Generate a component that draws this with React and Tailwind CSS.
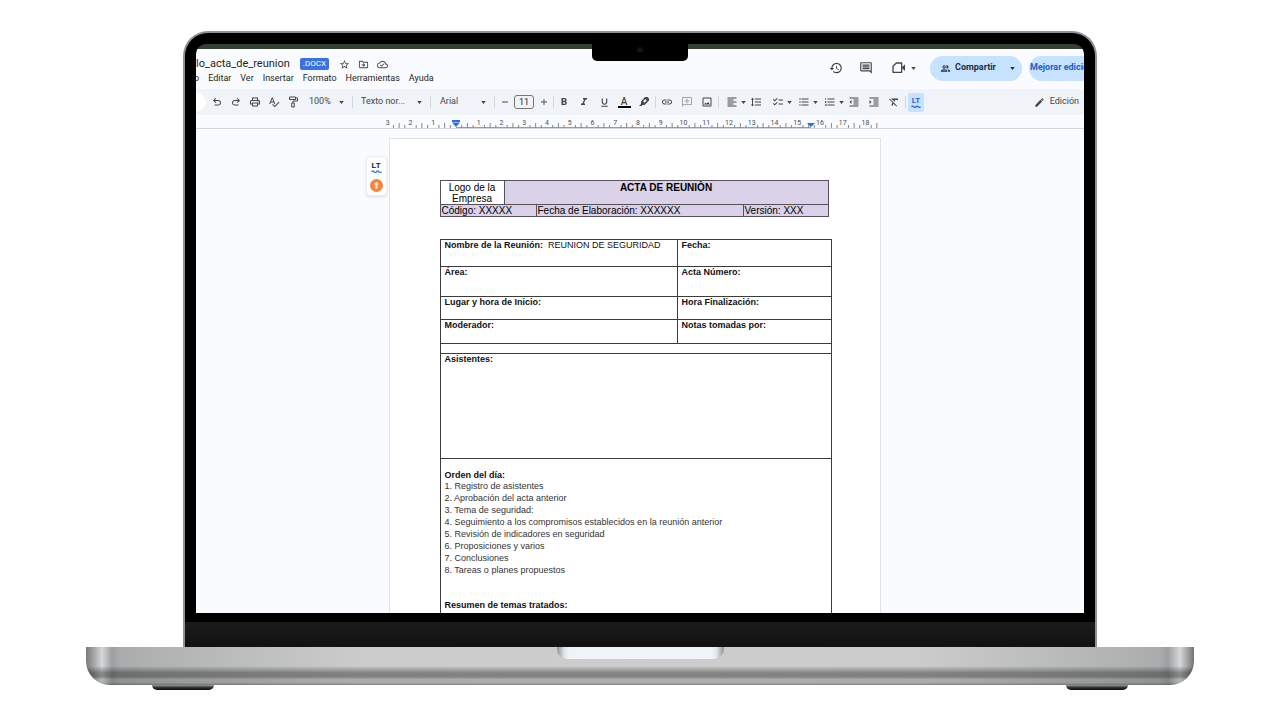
import {
  MdHistory, MdOutlineComment, MdOutlineGroup, MdOutlinePrint,
  MdSpellcheck, MdAdd, MdRemove, MdFormatBold, MdFormatItalic, MdFormatUnderlined, MdInsertLink,
  MdOutlineAddComment, MdOutlineImage, MdFormatAlignLeft, MdFormatLineSpacing, MdChecklist,
  MdFormatListBulleted, MdFormatListNumbered, MdFormatIndentDecrease, MdFormatIndentIncrease,
  MdFormatClear, MdModeEdit, MdStarOutline, MdOutlineDriveFileMove, MdOutlineCloudDone,
} from "react-icons/md";

const MENUS = ["Editar", "Ver", "Insertar", "Formato", "Herramientas", "Ayuda"];

const AGENDA = [
  "Registro de asistentes",
  "Aprobación del acta anterior",
  "Tema de seguridad:",
  "Seguimiento a los compromisos establecidos en la reunión anterior",
  "Revisión de indicadores en seguridad",
  "Proposiciones y varios",
  "Conclusiones",
  "Tareas o planes propuestos",
];

function UndoIcon({ flip }) {
  return (
    <svg viewBox="0 -960 960 960" fill="currentColor" className={flip ? "size-3 -scale-x-100" : "size-3"}>
      <path d="M280-200v-80h284q63 0 109.500-40T720-420q0-60-46.500-100T564-560H312l104 104-56 56-200-200 200-200 56 56-104 104h252q97 0 166.500 63T800-420q0 94-69.500 157T564-200H280Z" />
    </svg>
  );
}

function PaintRollerIcon() {
  return (
    <svg viewBox="0 0 24 24" fill="none" stroke="currentColor" strokeWidth="2" className="size-3">
      <path d="M5 2h12v5H5zM17 4h4v6h-9v4M9.500 14h5v8h-5z" />
    </svg>
  );
}

function HighlighterIcon() {
  return (
    <svg viewBox="0 0 24 24" className="size-3" fill="currentColor">
      <path d="M14 2h5l3 3v4l-9 9H9l-2 2H2l4-4v-5zM14.500 6L10 10.500l3 3L17.500 9z" fillRule="evenodd" />
    </svg>
  );
}

function VideoIcon() {
  return (
    <svg viewBox="0 0 24 24" fill="none" stroke="currentColor" strokeWidth="2" className="size-4">
      <path d="M8 4.500h8v14H3v-9z" strokeLinejoin="round" />
      <path d="M16 11.500l5-5v10z" fill="currentColor" stroke="none" />
    </svg>
  );
}

function LanguageToolMark({ wave }) {
  return (
    <span className="flex flex-col items-center">
      <span className="text-[8px] font-bold leading-[8px]">LT</span>
      <svg viewBox="0 0 20 5" className={wave} fill="none" stroke="currentColor" strokeWidth="2.500">
        <path d="M1 3q2.500-3 4.500 0t4.500 0t4.500 0t4.500 0" />
      </svg>
    </span>
  );
}

function Tool({ label, wide, children }) {
  return (
    <button
      type="button"
      aria-label={label}
      className={(wide ? "w-5" : "w-[19px]") + " flex h-5 shrink-0 items-center justify-center text-[12px]"}
    >
      {children}
    </button>
  );
}

function Caret() {
  return (
    <svg viewBox="0 0 6 4" className="h-[3px] w-[5px] shrink-0" fill="currentColor">
      <path d="M0 0h6L3 4z" />
    </svg>
  );
}

function MenuTool({ label, children }) {
  return (
    <button type="button" aria-label={label} className="flex h-5 w-[26px] shrink-0 items-center justify-end gap-[3px] text-[12px]">
      {children}
      <Caret />
    </button>
  );
}

function Picker({ label, value, className }) {
  return (
    <label className={className + " flex h-5 shrink-0 items-center pr-2"}>
      <select aria-label={label} className="min-w-0 flex-1 appearance-none bg-transparent">
        <option>{value}</option>
      </select>
      <Caret />
    </label>
  );
}

function Separator({ spaced }) {
  return <span className={(spaced ? "mx-px" : "") + " h-3 w-px shrink-0 bg-[#d3d6dc]"} />;
}

function Header() {
  return (
    <header className="flex h-10 justify-between">
      <div className="flex flex-col pt-2">
        <div className="flex h-[14px] items-center gap-[10px]">
          <h1 className="text-[11px] leading-[14px] text-[#1f1f1f]">lo_acta_de_reunion</h1>
          <span className="flex h-3 items-center rounded-[2px] bg-[#3b71e0] px-[3px] text-[8px] font-normal text-white">.DOCX</span>
          <span className="flex items-center gap-2 text-[11px] text-[#444746]">
            <button type="button" aria-label="Destacar"><MdStarOutline /></button>
            <button type="button" aria-label="Mover"><MdOutlineDriveFileMove /></button>
            <button type="button" aria-label="Estado del documento"><MdOutlineCloudDone /></button>
          </span>
        </div>
        <nav className="flex h-[15px] items-center gap-[9px] text-[9px] text-[#1f1f1f]">
          <span className="-ml-[2px]">o</span>
          {MENUS.map((m) => (
            <button key={m} type="button">{m}</button>
          ))}
        </nav>
      </div>
      <div className="flex h-[38px] items-center text-[#444746]">
        <button type="button" aria-label="Historial" className="mr-4 text-[14px]"><MdHistory /></button>
        <button type="button" aria-label="Comentarios" className="mr-[18px] text-[14px]"><MdOutlineComment /></button>
        <button type="button" aria-label="Videollamada" className="mr-[14px] flex items-center gap-1"><VideoIcon /><Caret /></button>
        <div className="mr-[7px] flex h-[25px] w-[92px] items-center justify-between rounded-full bg-[#c5e2fe] pl-[10px] pr-[7px] text-[9px] font-bold text-[#1f2d3d]">
          <button type="button" className="flex items-center gap-1">
            <MdOutlineGroup className="size-[11px]" />
            Compartir
          </button>
          <button type="button" aria-label="Opciones para compartir" className="flex h-4 items-center"><Caret /></button>
        </div>
        <button type="button" className="h-[25px] w-[55px] overflow-hidden whitespace-nowrap rounded-l-full bg-[#c5e2fe] pl-px text-left text-[9px] font-bold text-[#1f5bd0]">
          Mejorar edición
        </button>
      </div>
    </header>
  );
}

function Toolbar() {
  return (
    <div className="flex h-[26px] items-center bg-[#f0f4f9] text-[9px] text-[#444746]">
      <span className="mr-px h-[18px] w-[10px] shrink-0 rounded-r-full bg-white" />
      <Tool label="Deshacer"><UndoIcon /></Tool>
      <Tool label="Rehacer"><UndoIcon flip /></Tool>
      <Tool label="Imprimir"><MdOutlinePrint /></Tool>
      <Tool label="Ortografía"><MdSpellcheck /></Tool>
      <Tool label="Copiar formato"><PaintRollerIcon /></Tool>
      <Picker label="Zoom" value="100%" className="w-[50px] pl-[7px]" />
      <Separator />
      <Picker label="Estilo" value="Texto nor..." className="w-[77px] pl-2" />
      <Separator />
      <Picker label="Fuente" value="Arial" className="w-[63px] pl-[9px]" />
      <Separator />
      <Tool label="Reducir tamaño"><MdRemove className="size-[10px]" /></Tool>
      <input aria-label="Tamaño" defaultValue="11" className="h-[14px] w-5 rounded-[3px] border border-[#747775] bg-transparent text-center text-[#1f1f1f]" />
      <Tool label="Aumentar tamaño"><MdAdd className="size-[10px]" /></Tool>
      <Separator />
      <Tool wide label="Negrita"><MdFormatBold /></Tool>
      <Tool wide label="Cursiva"><MdFormatItalic /></Tool>
      <Tool wide label="Subrayado"><MdFormatUnderlined className="size-[11px]" /></Tool>
      <Tool wide label="Color del texto">
        <span className="w-[13px] border-b-2 border-black text-[10px] font-medium leading-[9px]">A</span>
      </Tool>
      <Tool wide label="Resaltar"><HighlighterIcon /></Tool>
      <Separator spaced />
      <Tool wide label="Insertar enlace"><MdInsertLink /></Tool>
      <Tool wide label="Añadir comentario"><MdOutlineAddComment className="-scale-x-100 text-[#a5a8ab]" /></Tool>
      <Tool wide label="Insertar imagen"><MdOutlineImage /></Tool>
      <Separator spaced />
      <MenuTool label="Alinear"><MdFormatAlignLeft /></MenuTool>
      <Tool wide label="Interlineado"><MdFormatLineSpacing /></Tool>
      <MenuTool label="Lista de comprobación"><MdChecklist /></MenuTool>
      <MenuTool label="Lista con viñetas"><MdFormatListBulleted /></MenuTool>
      <MenuTool label="Lista numerada"><MdFormatListNumbered /></MenuTool>
      <Tool wide label="Reducir sangría"><MdFormatIndentDecrease /></Tool>
      <Tool wide label="Aumentar sangría"><MdFormatIndentIncrease /></Tool>
      <Tool wide label="Borrar formato"><MdFormatClear /></Tool>
      <Separator spaced />
      <button type="button" aria-label="LanguageTool" className="ml-px flex h-[19px] w-4 items-center justify-center rounded-[2px] bg-[#c5e2fe] text-[#2f62cf]">
        <LanguageToolMark wave="h-[3px] w-[10px]" />
      </button>
      <button type="button" className="ml-auto flex items-center gap-[5px] pr-[5px]">
        <MdModeEdit className="size-[11px]" />
        Edición
      </button>
    </div>
  );
}

const UNIT = 22.75;

function Ruler() {
  const x = (cm) => 71 + cm * UNIT;
  const numbers = Array.from({ length: 22 }, (_, i) => i - 3).filter((n) => n <= 18 && n !== 0);
  const ticks = Array.from({ length: 87 }, (_, i) => -3 + (i + 1) / 4).filter((t) => t <= 18.5 && t % 1 !== 0);
  return (
    <div className="flex h-[14px] justify-center border-b border-[#d3d6dc] pr-[11px]">
      <svg viewBox="0 0 500 13" className="h-[13px] w-[500px]" aria-hidden="true">
        <path d="M71 12.500H426" stroke="#9a9da0" />
        {ticks.map((t) => (
          <path key={t} d={`M${x(t)} ${Math.abs(t % 1) === 0.5 ? 8 : 10}V13`} stroke="#85888b" />
        ))}
        {numbers.map((n) => (
          <text key={n} x={x(n)} y="10" textAnchor="middle" fontSize="7" fill="#4a4d50">{Math.abs(n)}</text>
        ))}
        <path d="M67 5h8v2h-8zM67 7.500h8l-4 4.500z" fill="#2b6fe0" />
        <path d="M422 8h8l-4 4z" fill="#2b6fe0" />
      </svg>
    </div>
  );
}

function HeadingTable() {
  const cell = "border border-[#55525c] p-0 align-top";
  return (
    <table className="w-[389px] table-fixed border-collapse text-[10px] leading-[11px] text-black">
      <colgroup>
        <col className="w-16" />
        <col className="w-8" />
        <col className="w-[207px]" />
        <col />
      </colgroup>
      <tbody>
        <tr className="h-[24px]">
          <td className={cell + " px-1 pt-px text-center"}>Logo de la Empresa</td>
          <th colSpan={3} className={cell + " bg-[#d9d2e9] pt-px font-bold"}>ACTA DE REUNIÒN</th>
        </tr>
        <tr className="h-3 bg-[#d9d2e9]">
          <td colSpan={2} className={cell + " pl-px"}>Código: XXXXX</td>
          <td className={cell + " pl-px"}>Fecha de Elaboración: XXXXXX</td>
          <td className={cell + " pl-px"}>Versión: XXX</td>
        </tr>
      </tbody>
    </table>
  );
}

function MinutesTable() {
  const cell = "border border-[#3c3c3c] px-1 py-0 align-top leading-[11px]";
  return (
    <table className="mt-[22px] w-[392px] table-fixed border-collapse text-[9px] leading-[12px] text-[#111]">
      <colgroup>
        <col className="w-[237px]" />
        <col />
      </colgroup>
      <tbody>
        <tr className="h-[27px]">
          <td className={cell}><b>Nombre de la Reunión:</b>&nbsp; REUNION DE SEGURIDAD</td>
          <td className={cell}><b>Fecha:</b></td>
        </tr>
        <tr className="h-[30px]">
          <td className={cell}><b>Área:</b></td>
          <td className={cell}><b>Acta Número:</b></td>
        </tr>
        <tr className="h-[23px]">
          <td className={cell}><b>Lugar y hora de Inicio:</b></td>
          <td className={cell}><b>Hora Finalización:</b></td>
        </tr>
        <tr className="h-[24px]">
          <td className={cell}><b>Moderador:</b></td>
          <td className={cell}><b>Notas tomadas por:</b></td>
        </tr>
        <tr className="h-[10px]">
          <td colSpan={2} className={cell} />
        </tr>
        <tr className="h-[105px]">
          <td colSpan={2} className={cell}><b>Asistentes:</b></td>
        </tr>
        <tr>
          <td colSpan={2} className="border border-b-0 border-[#3c3c3c] px-1 pb-[2px] pt-[10px] align-top">
            <b>Orden del día:</b>
            <ol className="-mt-px text-[#333]">
              {AGENDA.map((item, i) => (
                <li key={item}>{i + 1}. {item}</li>
              ))}
            </ol>
            <p className="mt-[23px] font-bold">Resumen de temas tratados:</p>
          </td>
        </tr>
      </tbody>
    </table>
  );
}

function Assistant() {
  return (
    <aside className="absolute right-full top-[17px] mr-[3px] flex h-[40px] w-[21px] flex-col items-center gap-[6px] rounded-[4px] border border-[#eceef1] bg-white pt-[5px] text-[#222] shadow-sm">
      <span className="flex flex-col items-center">
        <span className="text-[8px] font-bold leading-[8px]">LT</span>
        <svg viewBox="0 0 20 5" className="h-[3px] w-[11px]" fill="none" stroke="#3f7fe0" strokeWidth="2.500">
          <path d="M1 3q2.500-3 4.500 0t4.500 0t4.500 0t4.500 0" />
        </svg>
      </span>
      <svg viewBox="0 0 12 12" className="size-[13px]">
        <circle cx="6" cy="6" r="6" fill="#f5853b" />
        <path d="M6 2.500L8.500 5H7v4H5V5H3.500z" fill="#fbe3d2" />
      </svg>
    </aside>
  );
}

function Screen() {
  return (
    <div className="relative overflow-hidden rounded-t-[10px] bg-[#344032] pt-[5px]">
      <div className="absolute left-1/2 top-0 z-10 flex h-[17px] w-24 -translate-x-1/2 justify-center rounded-b-[5px] bg-black pt-[3px]">
        <span className="size-[6px] rounded-full bg-[#121315]" />
      </div>
      <div className="bg-[#f9fbfe]">
        <Header />
        <Toolbar />
        <Ruler />
        <main className="flex justify-center pr-[11px] pt-[9px]">
          <section className="relative w-[492px] border border-b-0 border-[#e0e3e8] bg-white pl-[50px] pt-[41px] font-['Liberation_Sans',Arial,sans-serif]">
            <Assistant />
            <HeadingTable />
            <MinutesTable />
          </section>
        </main>
      </div>
    </div>
  );
}

function Foot() {
  return (
    <span className="h-[5px] w-[62px] rounded-b-[8px] bg-linear-to-b from-[#9a9b9c] via-[#333] to-[#0c0c0c]" />
  );
}

export default function App() {
  return (
    <div className="min-h-screen bg-white px-[86px] pt-[31px] font-[Roboto,'Liberation_Sans',sans-serif]">
      <div className="mx-[97px] overflow-hidden rounded-t-[25px] border-2 border-b-0 border-[#8f9192] bg-black">
        <div className="px-[11px] pb-[9px] pt-[11px]">
          <Screen />
        </div>
        <div className="h-[25px] bg-linear-to-b from-[#1b1b1b] to-[#111]" />
      </div>
      <div className="relative flex h-[38px] justify-center overflow-hidden rounded-b-[24px] bg-[linear-gradient(to_right,#77797b_0,#a5a7a9_8px,#d5d7d8_16px,#9c9ea0_26px,#a9abac_34px,#b2b4b4_80px,#cbcbcb_270px,#cdcdcd_50%,#cbcbcb_calc(100%-270px),#b2b4b4_calc(100%-80px),#a9abac_calc(100%-34px),#9c9ea0_calc(100%-26px),#d5d7d8_calc(100%-14px),#8f9193_calc(100%-4px),#6f7173_100%)]">
        <div className="absolute inset-0 bg-[linear-gradient(to_bottom,transparent_0,transparent_50%,rgba(0,0,0,.36)_68%,rgba(0,0,0,.36)_78%,rgba(0,0,0,.14)_86%,rgba(0,0,0,.16)_94%,rgba(0,0,0,.36)_100%)]" />
        <div className="relative h-3 w-[167px] rounded-b-[10px] bg-[linear-gradient(to_right,#8f9193_0,#dfe2e6_7px,#f0f3f8_12px,#f0f3f8_calc(100%-12px),#dfe2e6_calc(100%-7px),#8f9193_100%)]" />
      </div>
      <div className="flex justify-between px-[66px]">
        <Foot />
        <Foot />
      </div>
    </div>
  );
}
